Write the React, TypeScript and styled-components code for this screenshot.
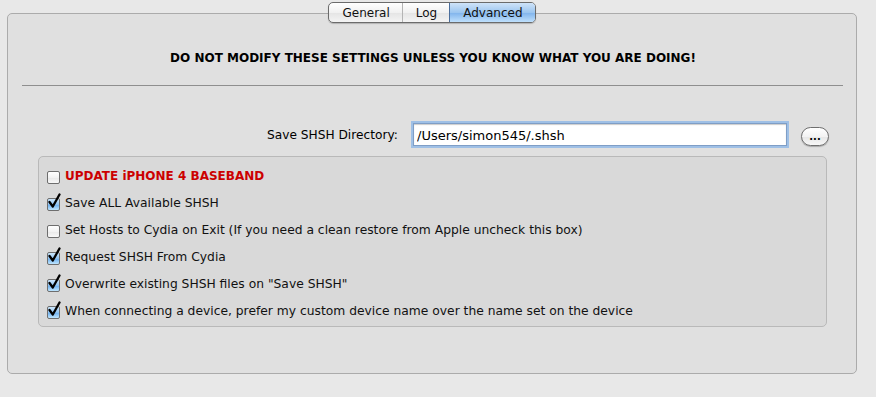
import styled, { createGlobalStyle } from 'styled-components'

const GlobalStyle = createGlobalStyle`
  html, body {
    margin: 0;
    padding: 0;
    background: #e8e8e8;
  }
  body {
    font-family: "DejaVu Sans", "Liberation Sans", sans-serif;
    color: #000;
  }
`

const tabs = ['General', 'Log', 'Advanced']

const options = [
  { label: 'UPDATE iPHONE 4 BASEBAND', checked: false, warn: true },
  { label: 'Save ALL Available SHSH', checked: true },
  { label: 'Set Hosts to Cydia on Exit (If you need a clean restore from Apple uncheck this box)', checked: false },
  { label: 'Request SHSH From Cydia', checked: true },
  { label: 'Overwrite existing SHSH files on "Save SHSH"', checked: true },
  { label: 'When connecting a device, prefer my custom device name over the name set on the device', checked: true },
]

const CheckBox = ({ checked }: { checked: boolean }) => (
  <Box $checked={checked}>
    {checked && (
      <svg width="15" height="17" viewBox="0 0 15 17">
        <path d="M2.5 9 L5.8 13.5 L12.5 1.5" fill="none" stroke="#000" strokeWidth="2.3" strokeLinecap="round" strokeLinejoin="round" />
      </svg>
    )}
  </Box>
)

export default function App() {
  return (
    <>
      <GlobalStyle />
      <Window>
        <TabBar>
          {tabs.map((t) => (
            <Tab key={t} $active={t === 'Advanced'}>{t}</Tab>
          ))}
        </TabBar>
        <Panel>
          <Warning>DO NOT MODIFY THESE SETTINGS UNLESS YOU KNOW WHAT YOU ARE DOING!</Warning>
          <Rule />
          <DirRow>
            <DirLabel>Save SHSH Directory:</DirLabel>
            <PathInput defaultValue="/Users/simon545/.shsh" />
            <Browse>...</Browse>
          </DirRow>
          <Group>
            {options.map((o) => (
              <Option key={o.label}>
                <CheckBox checked={o.checked} />
                <OptionText $warn={o.warn}>{o.label}</OptionText>
              </Option>
            ))}
          </Group>
        </Panel>
      </Window>
    </>
  )
}

const Window = styled.div`
  display: flex;
  flex-direction: column;
  align-items: center;
  padding: 2px 19px 0 7px;
  width: 876px;
  box-sizing: border-box;
`
const TabBar = styled.div`
  position: relative;
  z-index: 1;
  display: flex;
  height: 21px;
  box-sizing: border-box;
  border: 1px solid #6b6b6b;
  border-radius: 5px;
  overflow: hidden;
  background: linear-gradient(#ffffff, #f1f1f1 50%, #e4e4e4 51%, #f4f4f4);
  box-shadow: 0 1px 1px rgba(0, 0, 0, 0.2);
`
const Tab = styled.div<{ $active?: boolean }>`
  display: flex;
  align-items: center;
  padding: 0 12px 0 13px;
  font-size: 12px;
  color: #111;
  border-left: 1px solid #b4b4b4;
  &:first-child {
    border-left: none;
  }
  ${(p) =>
    p.$active &&
    `
    border-left: 1px solid #4b6e9c;
    background: linear-gradient(#cfe3f8, #9cc6f0 50%, #7fb3ec 51%, #bfe0fc);
  `}
`
const Panel = styled.div`
  margin-top: -10px;
  width: 850px;
  height: 361px;
  box-sizing: border-box;
  background: #e0e0e0;
  border: 1px solid #ababab;
  border-radius: 5px;
  padding: 37px 13px 0 14px;
  display: flex;
  flex-direction: column;
`
const Warning = styled.div`
  font-size: 12px;
  font-weight: bold;
  text-align: center;
  line-height: 15px;
  padding-left: 1px;
`
const Rule = styled.div`
  height: 1px;
  background: #8f8f8f;
  margin-top: 19px;
`
const DirRow = styled.div`
  display: flex;
  align-items: center;
  margin-top: 37px;
  padding-left: 245px;
`
const DirLabel = styled.div`
  font-size: 12.2px;
  width: 131px;
`
const PathInput = styled.input`
  margin-left: 15px;
  width: 374px;
  height: 23px;
  box-sizing: border-box;
  border: 1px solid #7f9ec6;
  box-shadow: 0 0 0 2px #9fc0e6, inset 0 1px 1px rgba(0, 0, 0, 0.2);
  font-family: "DejaVu Sans", sans-serif;
  font-size: 13px;
  padding: 1px 3px 0;
  outline: none;
  background: #fff;
  color: #000;
`
const Browse = styled.div`
  margin-left: 14px;
  margin-top: 3px;
  width: 28px;
  height: 19px;
  box-sizing: border-box;
  border: 1px solid #6f6f6f;
  border-radius: 10px;
  background: linear-gradient(#ffffff, #f3f3f3 50%, #e6e6e6 51%, #f7f7f7);
  box-shadow: 0 1px 1px rgba(0, 0, 0, 0.25);
  font-size: 10px;
  font-weight: bold;
  display: flex;
  align-items: flex-end;
  justify-content: center;
  line-height: 12px;
  padding-bottom: 2px;
`
const Group = styled.div`
  margin: 10px 16px 0 16px;
  height: 171px;
  box-sizing: border-box;
  background: #d9d9d9;
  border: 1px solid #b9b9b9;
  border-radius: 5px;
  padding: 11px 8px 0 8px;
  display: flex;
  flex-direction: column;
  gap: 11px;
`
const Option = styled.div`
  display: flex;
  align-items: center;
  height: 16px;
`
const Box = styled.div<{ $checked: boolean }>`
  position: relative;
  flex: none;
  width: 13px;
  height: 13px;
  box-sizing: border-box;
  border: 1px solid #6e6e6e;
  border-radius: 2px;
  margin-top: 2px;
  background: ${(p) =>
    p.$checked
      ? 'linear-gradient(#cde6fb, #8ec3f2 50%, #6aaef0 51%, #bfe5fd)'
      : 'linear-gradient(#ffffff, #f2f2f2 50%, #e8e8e8 51%, #f8f8f8)'};
  svg {
    position: absolute;
    left: -1px;
    top: -6px;
  }
`
const OptionText = styled.span<{ $warn?: boolean }>`
  margin-left: 5px;
  font-size: ${(p) => (p.$warn ? '12px' : '12.3px')};
  white-space: nowrap;
  color: ${(p) => (p.$warn ? '#cc0000' : '#111')};
  font-weight: ${(p) => (p.$warn ? 'bold' : 'normal')};
`
